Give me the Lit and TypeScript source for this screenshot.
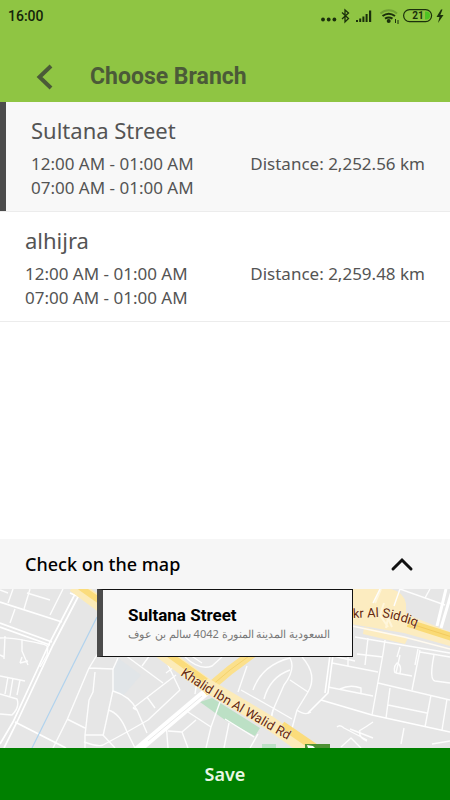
import { LitElement, html, css, svg } from "lit";
import { customElement, property, state } from "lit/decorators.js";
import { classMap } from "lit/directives/class-map.js";

interface Branch {
  name: string;
  hours: string[];
  distance: string;
  address: string;
}

const BRANCHES: Branch[] = [
  {
    name: "Sultana Street",
    hours: ["12:00 AM - 01:00 AM", "07:00 AM - 01:00 AM"],
    distance: "2,252.56 km",
    address: "السعودية المدينة المنورة 4042 سالم بن عوف",
  },
  {
    name: "alhijra",
    hours: ["12:00 AM - 01:00 AM", "07:00 AM - 01:00 AM"],
    distance: "2,259.48 km",
    address: "السعودية المدينة المنورة",
  },
];

@customElement("status-bar")
export class StatusBar extends LitElement {
  static styles = css`
    :host {
      display: flex;
      justify-content: space-between;
      align-items: center;
      height: 32px;
      padding: 0 4px 0 8px;
      font: 500 14px/32px Roboto, sans-serif;
      color: #14230a;
    }
    svg {
      display: block;
    }
  `;

  render() {
    return html`
      <span>16:00</span>
      <svg width="126" height="20" viewBox="0 0 126 20" role="img" aria-label="Bluetooth, signal, Wi-Fi, battery 21 percent, charging">
        <g fill="#1b300c">
          <circle cx="3" cy="13.500" r="1.900" /><circle cx="8.700" cy="13.500" r="1.900" /><circle cx="14.400" cy="13.500" r="1.900" />
          <path d="M36 14h2v2h-2zM39.200 12.500h2V16h-2zM42.400 10.500h2V16h-2zM45.600 8h2v8h-2zM49 4.500h2.200V16H49z" />
          <path d="M121 3.500l-4.500 7.500h3l-1.500 6 5.500-8h-3.200l2.200-5.500z" />
          <circle cx="68.700" cy="15" r="2" />
        </g>
        <path d="M22 6.500l6.500 6-3.500 3.500V4l3.500 3-6.500 6" fill="none" stroke="#1b300c" stroke-width="1.300" />
        <g fill="none" stroke-width="2">
          <path d="M60.500 7.500c5-4.200 11.500-4.200 16.500 0" stroke="#6f9f34" />
          <path d="M62.500 10c4-3 8.500-3 12.500 0" stroke="#1b300c" />
          <path d="M65 12.700c2.500-1.700 5-1.700 7.500 0" stroke="#1b300c" />
          <path d="M75.500 13v4M78 14v4" stroke="#1b300c" stroke-width="1" />
        </g>
        <rect x="83.600" y="3.600" width="28" height="12" rx="6" fill="none" stroke="#1b300c" stroke-width="1.200" />
        <path d="M105 5.500h1a4 4 0 0 1 0 8h-1z" fill="#4ec323" />
        <text x="98" y="13" text-anchor="middle" font-size="10" font-weight="700" fill="#1b300c">21</text>
      </svg>
    `;
  }
}

@customElement("branch-row")
export class BranchRow extends LitElement {
  @property({ attribute: false }) branch!: Branch;
  @property({ type: Boolean }) selected = false;

  static styles = css`
    :host {
      display: block;
    }
    .row {
      display: block;
      box-sizing: border-box;
      width: 100%;
      margin: 0;
      padding: 14px 25px 11px;
      border: 0;
      border-bottom: 1px solid #ececec;
      background: #fff;
      color: #545454;
      text-align: left;
      font: 400 17px/24px "Noto Sans", "Open Sans", sans-serif;
      cursor: pointer;
    }
    .selected {
      background: #f8f8f8;
      box-shadow: inset 6px 0 #4c4c4c;
      padding-left: 31px;
    }
    .name {
      display: block;
      font-size: 22px;
      line-height: 28px;
      margin-bottom: 8px;
    }
    .details {
      display: flex;
      justify-content: space-between;
    }
    .hours {
      display: flex;
      flex-direction: column;
    }
  `;

  render() {
    return html`
      <button class=${classMap({ row: true, selected: this.selected })} aria-pressed=${this.selected ? "true" : "false"}>
        <span class="name">${this.branch.name}</span>
        <span class="details">
          <span class="hours">${this.branch.hours.map((h) => html`<span>${h}</span>`)}</span>
          <span>Distance: ${this.branch.distance}</span>
        </span>
      </button>
    `;
  }
}

const MINOR_STREETS = [
  "M13 0L8 14M30 0L24 20M63 0L50 26M27 4L50 11M15 20L10 34M0 1L8 4",
  "M0 49C12 48 26 52 38 54S48 58 47 66L40 78M22 50V62L28 76M22 68L20 74M20 74L28 72M5 47L4 70M0 66L4 68",
  "M0 87L25 92M8 88L5 105M13 89L10 107M20 91L17 106M0 105L17 110Q20 118 12 126L0 125",
  "M100 61L89 79L67 131L53 159M89 79L113 80M118 69L113 80V101L108 124L103 147",
  "M95 83L93 103L89 111L85 146V159M67 130L85 139M85 146H103L115 159M84 153Q98 158 103 156",
  "M113 102Q130 107 137 121L147 144M108 121Q120 124 127 143L135 159M103 156L127 143L148 131L180 101",
  "M125 66L163 94M133 119L176 86M147 108L155 119M142 77L150 66M168 76L180 101M137 121L133 119M166 84L174 78",
  "M166 133L168 159M168 142L182 143L196 131M182 143L188 159M188 123L211 138L220 113M211 138L206 159M225 130L254 148M229 134L224 159M258 145L250 159",
  "M185 68Q200 82 212 77L222 68M190 66L202 74M195 105L197 92",
  "M247 77L238 103M241 101L273 119L292 130M253 101Q262 76 290 69Q296 80 284 96L273 121L270 135",
  "M264 110Q270 88 290 81M290 91L308 103L297 121L291 143M302 68Q318 86 308 103M273 121L269 136M297 121Q305 127 311 123",
  "M332 74L378 83M348 66V77M328 98L373 107M340 100Q350 95 361 99V105",
  "M385 51L383 65L372 126M378 94L450 111M420 61L412 101M420 63L450 68M390 99L386 129M388 116L427 124M431 106L425 138M447 110L442 141",
  "M400 66L396 84L412 87M395 84Q393 78 397 74Q402 76 400 84M434 66Q429 91 435 92L450 94",
  "M355 48L450 64M368 49L365 76M418 60L415 76M357 65L383 68M333 67L355 72M400 58L397 68",
  "M400 0L445 16M430 0L425 9M380 0L373 14M394 17L400 0",
  "M337 138Q340 135 344 139L367 151M350 140L373 149M359 142Q366 138 373 133M341 158L351 149L361 159M404 139L401 155M360 142Q358 148 367 152M450 152L432 155",
];

@customElement("branch-map")
export class BranchMap extends LitElement {
  static styles = css`
    :host {
      display: block;
      height: 159px;
      background: #e6e6e6;
    }
    svg {
      display: block;
      width: 100%;
      height: 100%;
    }
    text {
      font-family: Roboto, sans-serif;
      font-size: 13px;
      fill: #66290f;
      stroke: #fff3d0;
      stroke-width: 1px;
      paint-order: stroke;
    }
  `;

  render() {
    return html`
      <svg viewBox="0 0 450 159" preserveAspectRatio="xMidYMid slice" role="img" aria-label="Map of the streets round the branch">
        <path d="M113 82L118 69L141 86L123 107L113 101Z" fill="#e1e5e8" />
        <path d="M200 113L212 109L225 117L260 139L255 147L225 131Z" fill="#bce0c5" />
        <path d="M262 155H276V159H262Z" fill="#bce0c5" />
        <path d="M345 0H391Q404 3 406 15V25L450 43V57L404 44L345 34Z" fill="#fcecc0" />
        <path d="M364 38L408 49L405 55L363 45Z" fill="#fcecc0" />
        <path d="M375 14L381 0M388 38L380 26L384 14M386 39L388 29L392 38" fill="none" stroke="#fff6db" stroke-width="2" />
        <g fill="none" stroke="#fdfdfd" stroke-width="1.400" stroke-linejoin="round">
          ${MINOR_STREETS.map((d) => svg`<path d=${d} />`)}
        </g>
        <g fill="none" stroke="#fff" stroke-width="2">
          <path d="M0 13L62 33M0 34L52 53M0 38L50 56M15 133L66 159" stroke-width="1.700" />
          <path d="M75 5L50 53L13 133L0 155M79 6L53 56L17 133L4 159M70 4L77 7" stroke-width="1.700" />
          <path d="M333 66L328 104L321 111L308 124M330 66L325 104M321 111L372 126L450 143" stroke-width="1.600" />
          <path d="M352 37L404 48L450 60" stroke-width="1.500" stroke="#fffaf0" />
          <path d="M446 0L437 37M452 2L441 39" stroke-width="3" />
        </g>
        <path d="M97 28L73 76L32 159" fill="none" stroke="#b1d3ee" stroke-width="1.200" />
        <path d="M135 163L206 103" fill="none" stroke="#fff" stroke-width="8" />
        <path d="M148 152L202 107" fill="none" stroke="#e9e9e9" />
        <path d="M204 103L230 81L256 62" fill="none" stroke="#fbe08c" stroke-width="9" />
        <path d="M204 103L230 81L256 62" fill="none" stroke="#f5d26c" />
        <path d="M74 -4L97 13L160 62L206 96L270 134L308 161" fill="none" stroke="#fcebb8" stroke-width="14" />
        <path d="M80 -2L97 10L164 62L206 92" fill="none" stroke="#fbdc7b" stroke-width="6" />
        <path d="M282 136L320 162" fill="none" stroke="#fbdc7b" stroke-width="8" />
        <path d="M408 34L452 48" fill="none" stroke="#fada75" stroke-width="8" />
        <path d="M408 34L452 48" fill="none" stroke="#f3ca5d" />
        <path d="M305 155H330V159H305Z" fill="#4e9135" />
        <path d="M307 156L313 157L315 159H308Z" fill="#fff" />
        <path id="siddiq" d="M353 29L378 28Q395 28 440 47" fill="none" />
        <path id="khalid" d="M180 86L204 102Q240 124 300 158" fill="none" />
        <text><textPath href="#siddiq">kr Al Siddiq</textPath></text>
        <text><textPath href="#khalid">Khalid Ibn Al Walid Rd</textPath></text>
      </svg>
    `;
  }
}

@customElement("app-root")
export class AppRoot extends LitElement {
  @state() private selected = 0;
  @state() private mapOpen = true;

  static styles = css`
    :host {
      display: flex;
      flex-direction: column;
      min-height: 100vh;
      background: #fff;
      font-family: "Noto Sans", "Open Sans", sans-serif;
    }
    button {
      margin: 0;
      border: 0;
      font-family: inherit;
      cursor: pointer;
    }
    .header {
      background: #8fc543;
      color: #4b5a38;
    }
    .title-bar {
      display: flex;
      align-items: center;
      gap: 27px;
      height: 50px;
      padding: 20px 28px 0;
    }
    .back {
      display: flex;
      padding: 4px;
      background: none;
      color: inherit;
    }
    .title {
      margin: 0;
      font: 700 23px/28px Roboto, sans-serif;
    }
    .branches {
      flex: 1;
      margin: 0;
      padding: 0;
      list-style: none;
    }
    .map-toggle {
      display: flex;
      align-items: center;
      justify-content: space-between;
      height: 50px;
      padding: 0 36px 0 25px;
      background: #f6f6f6;
      color: #000;
      font-size: 18px;
      font-weight: 500;
    }
    .map-area {
      position: relative;
    }
    .card {
      position: absolute;
      top: 0;
      left: 50%;
      transform: translateX(-50%);
      box-sizing: border-box;
      width: 256px;
      height: 68px;
      padding: 13px 20px 0 25px;
      border: 1px solid #111;
      border-left: 6px solid #4c4c4c;
      background: #f8f8f8;
      white-space: nowrap;
    }
    .card-name {
      margin: 0;
      font: 700 17px/24px Roboto, sans-serif;
      color: #000;
    }
    .card-address {
      margin: 0;
      font-size: 11px;
      line-height: 14px;
      color: #777;
    }
    .save {
      height: 52px;
      background: #008000;
      color: #e9f7e4;
      font-size: 18px;
      font-weight: 600;
    }
  `;

  render() {
    const branch = BRANCHES[this.selected];
    return html`
      <header class="header">
        <status-bar></status-bar>
        <div class="title-bar">
          <button class="back" aria-label="Back">
            <svg width="27" height="26" viewBox="0 0 27 26"><path d="M19 2L7.500 13L19 24" fill="none" stroke="currentColor" stroke-width="4" /></svg>
          </button>
          <h1 class="title">Choose Branch</h1>
        </div>
      </header>
      <ul class="branches">
        ${BRANCHES.map(
          (b, i) => html`<li>
            <branch-row .branch=${b} ?selected=${i === this.selected} @click=${() => (this.selected = i)}></branch-row>
          </li>`
        )}
      </ul>
      <button class="map-toggle" aria-expanded=${this.mapOpen ? "true" : "false"} @click=${() => (this.mapOpen = !this.mapOpen)}>
        <span>Check on the map</span>
        <svg width="24" height="16" viewBox="0 0 24 16"><path d="M3 13L12 4L21 13" fill="none" stroke="#111" stroke-width="3" stroke-linecap="round" /></svg>
      </button>
      ${this.mapOpen
        ? html`<section class="map-area">
            <branch-map></branch-map>
            <div class="card">
              <h2 class="card-name">${branch.name}</h2>
              <p class="card-address" lang="ar">${branch.address}</p>
            </div>
          </section>`
        : null}
      <button class="save">Save</button>
    `;
  }
}
